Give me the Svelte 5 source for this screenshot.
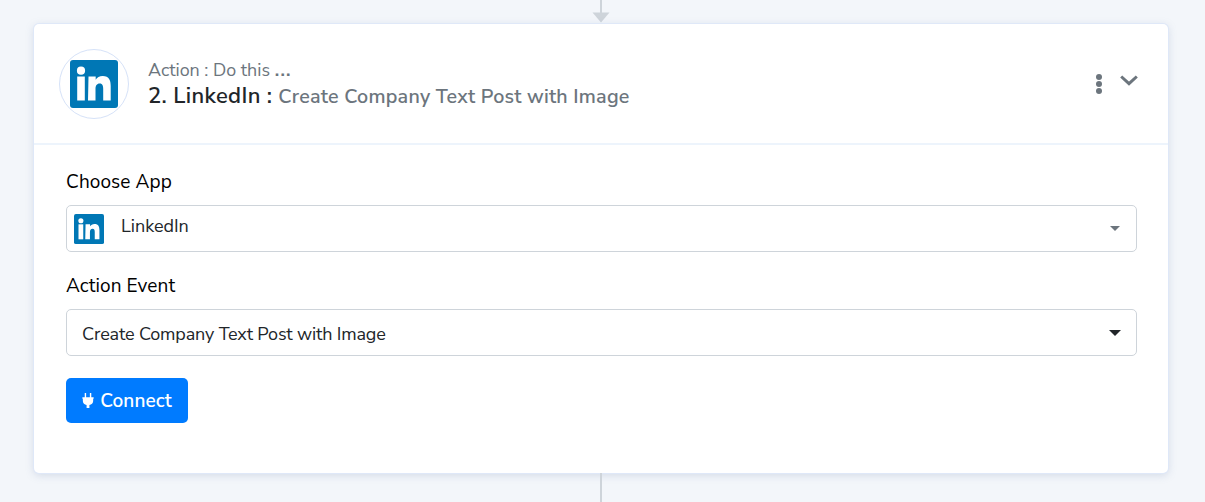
<script>
  const fields = [
    { label: 'Choose App', value: 'LinkedIn', app: true },
    { label: 'Action Event', value: 'Create Company Text Post with Image', app: false }
  ];
</script>

<div class="page">
  <div class="connector top">
    <span class="line"></span>
    <svg class="arrow" width="18" height="11" viewBox="0 0 18 11"><path d="M0.5 0.5H17.5L9 10.500Z" fill="#ced4da"/></svg>
  </div>

  <section class="card">
    <header class="head">
      <div class="logo-ring">
        <svg width="48" height="48" viewBox="0 0 48 48">
          <rect width="48" height="48" rx="3" fill="#0077b5"/>
          <circle cx="11" cy="10.700" r="4.100" fill="#fff"/>
          <rect x="7.200" y="16.500" width="7.600" height="24" fill="#fff"/>
          <path d="M18.500 16.500h7.200v3.200c1.200-2.200 3.800-3.800 7-3.800 6.600 0 8 4.300 8 10.200v14.400h-7.500V29c0-2.800-.5-5.400-3.500-5.400s-4.200 2.400-4.200 5.400v11.500h-7.500Z" fill="#fff"/>
        </svg>
      </div>
      <div class="titles">
        <div class="kicker">Action : Do this <b>...</b></div>
        <div class="title"><strong>2. LinkedIn :</strong> <span>Create Company Text Post with Image</span></div>
      </div>
      <div class="tools">
        <svg class="dots" width="6" height="20" viewBox="0 0 6 20"><circle cx="3" cy="3" r="3" fill="#6c757d"/><circle cx="3" cy="10" r="3" fill="#6c757d"/><circle cx="3" cy="17" r="3" fill="#6c757d"/></svg>
        <svg class="chev" width="18" height="11" viewBox="0 0 18 11"><path d="M1.200 1.500L9 8.700l7.800-7.200" fill="none" stroke="#6c757d" stroke-width="3"/></svg>
      </div>
    </header>

    <div class="body">
      {#each fields as f}
        <div class="label">{f.label}</div>
        <div class="select" class:app={f.app}>
          {#if f.app}
            <svg width="30" height="30" viewBox="0 0 48 48" class="mini">
              <rect width="48" height="48" rx="3" fill="#0077b5"/>
              <circle cx="11" cy="10.700" r="4.100" fill="#fff"/>
              <rect x="7.200" y="16.500" width="7.600" height="24" fill="#fff"/>
              <path d="M18.500 16.500h7.200v3.200c1.200-2.200 3.800-3.800 7-3.800 6.600 0 8 4.300 8 10.200v14.400h-7.500V29c0-2.800-.5-5.400-3.500-5.400s-4.200 2.400-4.200 5.400v11.500h-7.500Z" fill="#fff"/>
            </svg>
          {/if}
          <span class="value">{f.value}</span>
          <span class="caret"></span>
        </div>
      {/each}
      <button class="connect">
        <svg width="12" height="15" viewBox="0 0 12 16"><path d="M2.500 0h1.500v4.500h4V0h1.500v4.500H12V6h-.5v2.500c0 2.200-1.800 4-4 4.300V16h-3v-3.200c-2.200-.3-4-2.100-4-4.300V6H0V4.500h2.500Z" fill="#fff"/></svg>
        Connect
      </button>
    </div>
  </section>

  <div class="connector bottom"><span class="line"></span></div>
</div>

<style>
  :global(body) {
    margin: 0;
    background: #f3f6fa;
  }
  .page {
    height: 502px;
    overflow: hidden;
    display: flex;
    flex-direction: column;
    padding: 0 37px 0 34px;
    box-sizing: border-box;
    font-family: "Nunito Sans", "Lato", "Open Sans", sans-serif;
    color: #212529;
  }
  .connector {
    display: flex;
    flex-direction: column;
    align-items: center;
  }
  .connector.top {
    height: 24px;
  }
  .connector.top .line {
    width: 2px;
    height: 13px;
    background: #ced4da;
  }
  .arrow {
    margin-top: -1px;
  }
  .connector.bottom .line {
    width: 2px;
    height: 29px;
    background: #ced4da;
  }
  .card {
    height: 449px;
    box-sizing: border-box;
    background: #fff;
    border-radius: 5px;
    box-shadow: 0 0 0 1px #dfe8f8, 0 2px 8px rgba(120, 140, 180, .28);
    flex: none;
  }
  .head {
    height: 121px;
    box-sizing: border-box;
    display: flex;
    align-items: center;
    padding: 1px 30px 0 25px;
    border-bottom: 2px solid #edf4fc;
  }
  .logo-ring {
    width: 70px;
    height: 70px;
    box-sizing: border-box;
    border: 1px solid #d6e2f8;
    border-radius: 50%;
    display: flex;
    align-items: center;
    justify-content: center;
    flex: none;
  }
  .titles {
    margin-left: 19px;
    flex: 1;
  }
  .kicker {
    font-size: 17.900px;
    line-height: 24px;
    color: #6c757d;
  }
  .kicker b {
    font-weight: 700;
    letter-spacing: 1.300px;
  }
  .title {
    font-size: 22px;
    line-height: 28px;
    font-weight: 600;
  }
  .title strong {
    font-weight: 600;
    letter-spacing: .35px;
  }
  .title span {
    color: #6c757d;
    font-size: 19.700px;
    letter-spacing: .23px;
  }
  .tools {
    display: flex;
    align-items: flex-start;
    gap: 18px;
    margin-bottom: 2px;
    height: 22px;
  }
  .dots {
    margin-top: 2px;
  }
  .chev {
    margin-top: 3px;
  }
  .body {
    padding: 25px 31px 0 32px;
  }
  .label {
    font-size: 19px;
    letter-spacing: .1px;
    line-height: 24px;
    color: #000;
    margin-bottom: 11px;
  }
  .select {
    height: 47px;
    box-sizing: border-box;
    border: 1px solid #ced4da;
    border-radius: 5px;
    display: flex;
    align-items: center;
    padding: 0 15px;
    margin-bottom: 22px;
    font-size: 18px;
    letter-spacing: -0.15px;
    color: #212529;
  }
  .select.app {
    padding-left: 7px;
  }
  .mini {
    margin-right: 17px;
  }
  .value {
    flex: 1;
    margin-top: 2px;
  }
  .app .value {
    letter-spacing: 0;
    margin: 0 0 6px;
  }
  .caret {
    border-left: 6px solid transparent;
    border-right: 6px solid transparent;
    border-top: 6px solid #212529;
  }
  .app .caret {
    border-left-width: 5px;
    border-right-width: 5px;
    border-top: 5px solid #6c757d;
    margin-right: 1px;
  }
  .connect {
    height: 45px;
    width: 122px;
    border: 0;
    border-radius: 5px;
    background: #007bff;
    color: #fff;
    font: inherit;
    font-size: 19px;
    letter-spacing: .1px;
    font-weight: 600;
    display: flex;
    align-items: center;
    justify-content: center;
    gap: 6px;
    padding: 0;
  }
</style>
